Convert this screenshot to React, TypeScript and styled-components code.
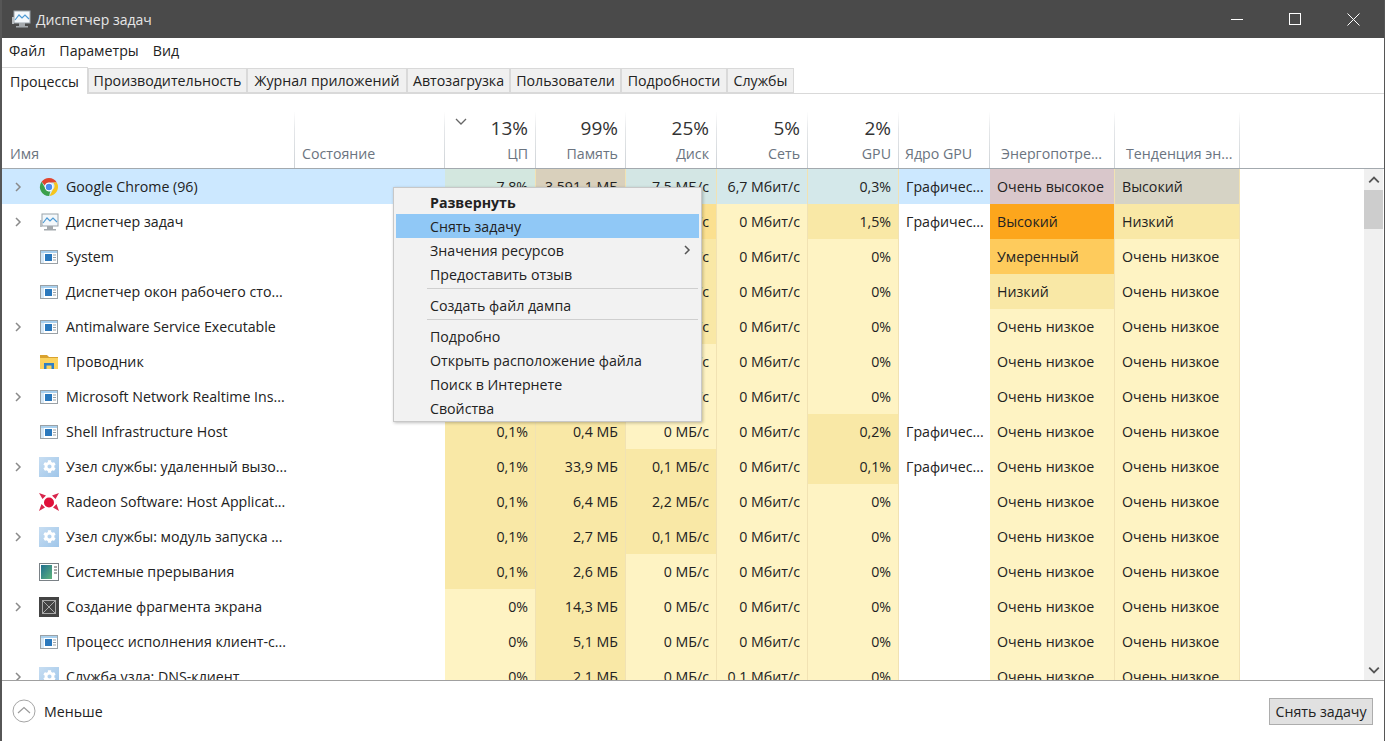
import { FaCog } from 'react-icons/fa';
import styled, { createGlobalStyle } from 'styled-components';

const COLUMNS = '293px 150px 91px 90px 91px 91px 91px 91px 125px 125px';

const heat: Record<string, string> = {
  none: 'transparent',
  low: '#fef3c3',
  mild: '#f9e8a6',
  warm: '#fbe08f',
  med: '#fecb5c',
  high: '#fda61c',
  selBlue: '#cce8ff',
  selCpu: '#d3e7df',
  selMem: '#d9d0bc',
  selDisk: '#d3e6e4',
  selNet: '#d4e8ea',
  selEnergy: '#d9c7cb',
  selTrend: '#d6d3c5',
};

const GlobalStyle = createGlobalStyle`
  html, body {
    margin: 0;
    padding: 0;
    background: #fff;
  }

  body {
    font-family: 'Open Sans', 'Noto Sans', sans-serif;
    font-size: 14.2px;
    color: #222;
  }
`;

const Window = styled.div`
  position: relative;
  display: flex;
  flex-direction: column;
  box-sizing: border-box;
  width: 1385px;
  height: 741px;
  overflow: hidden;
  background: #fff;
  border-left: 2px solid #565656;
  border-right: 1px solid #565656;
`;

const TitleBar = styled.div`
  display: flex;
  align-items: center;
  flex: 0 0 38px;
  margin-left: -2px;
  margin-right: -1px;
  padding: 0 3px 0 11px;
  background: #4a4a4a;
  color: #e6e6e6;
  font-size: 14px;
`;

const TitleText = styled.span`
  margin-left: 5px;
  flex: 1;
`;

const WindowButton = styled.div`
  display: flex;
  align-items: center;
  justify-content: center;
  width: 58px;
  height: 38px;
`;

const MenuBar = styled.div`
  display: flex;
  align-items: center;
  gap: 14px;
  flex: 0 0 24px;
  padding-left: 7px;
`;

const TabBar = styled.div`
  display: flex;
  align-items: flex-end;
  box-sizing: border-box;
  flex: 0 0 32px;
  border-bottom: 1px solid #d9d9d9;
`;

const Tab = styled.div<{ $width: number; $active?: boolean }>`
  display: flex;
  align-items: center;
  justify-content: center;
  box-sizing: border-box;
  width: ${({ $width }) => $width}px;
  height: ${({ $active }) => ($active ? 27 : 25)}px;
  margin-bottom: ${({ $active }) => ($active ? -1 : 0)}px;
  background: ${({ $active }) => ($active ? '#fff' : '#f0f0f0')};
  border: 1px solid #d9d9d9;
  border-left: ${({ $active }) => ($active ? 'none' : '1px solid #d9d9d9')};
  border-bottom: ${({ $active }) => ($active ? 'none' : '1px solid #d9d9d9')};
  white-space: nowrap;
`;

const TableHeader = styled.div`
  position: relative;
  display: grid;
  grid-template-columns: ${COLUMNS};
  box-sizing: border-box;
  flex: 0 0 75px;
  border-bottom: 1px solid #a3a9ae;
`;

const HeaderCell = styled.div<{ $right?: boolean; $inset?: number }>`
  display: flex;
  flex-direction: column;
  justify-content: flex-end;
  align-items: ${({ $right }) => ($right ? 'flex-end' : 'flex-start')};
  box-sizing: border-box;
  margin-top: 18px;
  padding: 0 7px 5px ${({ $inset }) => $inset ?? 7}px;
  border-right: 1px solid;
  border-image: linear-gradient(to bottom, #fff 0, #e6e8ea 30%, #cdd2d6 100%) 1;
  color: #6b7480;
  white-space: nowrap;
`;

const Percent = styled.div`
  margin-bottom: 3px;
  font-size: 19px;
  line-height: 26px;
  color: #333;
`;

const SortArrow = styled.svg`
  position: absolute;
  left: 452px;
  top: 24px;
`;

const TableBody = styled.div`
  display: flex;
  flex: 1;
  min-height: 0;
`;

const Rows = styled.div`
  flex: 1;
  overflow: hidden;
`;

const Row = styled.div`
  display: grid;
  grid-template-columns: ${COLUMNS};
  height: 35px;
`;

const NameCell = styled.div<{ $selected?: boolean }>`
  display: flex;
  align-items: center;
  padding-left: 10px;
  background: ${({ $selected }) => ($selected ? heat.selBlue : 'transparent')};
  white-space: nowrap;
`;

const Expander = styled.span`
  display: flex;
  justify-content: center;
  width: 12px;
`;

const IconSlot = styled.span`
  display: flex;
  justify-content: center;
  width: 20px;
  margin: 0 7px 0 15px;
`;

const GearTile = styled.span`
  display: flex;
  align-items: center;
  justify-content: center;
  width: 20px;
  height: 20px;
  background: linear-gradient(135deg, #c8def2, #9fc6ea);
  color: #fff;
`;

const Cell = styled.div<{ $level: string; $right?: boolean }>`
  display: flex;
  align-items: center;
  justify-content: ${({ $right }) => ($right ? 'flex-end' : 'flex-start')};
  box-sizing: border-box;
  padding: 0 7px;
  background: ${({ $level }) => heat[$level]};
  border-right: 1px solid ${({ $level }) => ($level === 'none' || $level === 'selBlue' ? 'transparent' : '#f1e2b3')};
  white-space: nowrap;
`;

const Scrollbar = styled.div`
  display: flex;
  flex-direction: column;
  flex: 0 0 19px;
  margin-right: 1px;
  background: #f0f0f0;
`;

const ScrollButton = styled.div`
  display: flex;
  align-items: center;
  justify-content: center;
  flex: 0 0 21px;
`;

const ScrollThumb = styled.div`
  flex: 0 0 39px;
  background: #cdcdcd;
`;

const ScrollTrack = styled.div`
  flex: 1;
`;

const Footer = styled.div`
  display: flex;
  align-items: center;
  box-sizing: border-box;
  flex: 0 0 61px;
  padding: 0 11px 0 10px;
  border-top: 1px solid #a0a0a0;
`;

const Collapse = styled.div`
  display: flex;
  align-items: center;
  gap: 8px;
  flex: 1;
`;

const EndButton = styled.div`
  display: flex;
  align-items: center;
  justify-content: center;
  box-sizing: border-box;
  width: 104px;
  height: 27px;
  background: #e1e1e1;
  border: 1px solid #adadad;
`;

const ContextMenu = styled.div`
  position: absolute;
  left: 391px;
  top: 187px;
  box-sizing: border-box;
  width: 309px;
  height: 235px;
  padding: 2px 2px 1px;
  background: #f2f2f2;
  border: 1px solid #c8c8c8;
  box-shadow: 1px 1px 3px rgba(0 0 0 / 25%);
`;

const MenuItem = styled.div<{ $active?: boolean; $bold?: boolean }>`
  display: flex;
  align-items: center;
  justify-content: space-between;
  height: 24px;
  padding: 0 7px 0 34px;
  background: ${({ $active }) => ($active ? '#90c8f6' : 'transparent')};
  font-weight: ${({ $bold }) => ($bold ? 700 : 400)};
`;

const MenuSeparator = styled.div`
  height: 1px;
  margin: 2px 1px 4px 31px;
  background: #cfcfcf;
`;

const TaskManagerIcon = ({ size = 20 }: { size?: number }) => (
  <svg width={size} height={size} viewBox="0 0 20 20">
    <rect x="3" y="2" width="16" height="12" fill="#f4f8fb" stroke="#9aa3aa" />
    <path d="M4 11l4-5 3 3 3-3 4 4" fill="none" stroke="#4d9ad4" strokeWidth="1.2" />
    <rect x="1" y="8" width="2" height="7" fill="#b9bdc0" />
    <path d="M8 14h6v3H8zM5 17h12v1.5H5z" fill="#a4a9ad" />
  </svg>
);

const ChromeIcon = () => (
  <svg width="20" height="20" viewBox="0 0 20 20">
    <path d="M10 1a9 9 0 0 1 7.8 4.5H10a4.5 4.5 0 0 0-4.2 3L2.6 4.800A9 9 0 0 1 10 1z" fill="#e0452f" />
    <path d="M17.800 5.500A9 9 0 0 1 10.500 19l3.400-6.500a4.500 4.500 0 0 0 0-7z" fill="#f6c51d" />
    <path d="M2.600 4.800l3.600 6.500a4.500 4.500 0 0 0 5 3l-1 4.700A9 9 0 0 1 2.600 4.800z" fill="#3ba04c" />
    <circle cx="10" cy="10" r="4.200" fill="#fff" />
    <circle cx="10" cy="10" r="3.200" fill="#4a8bf0" />
  </svg>
);

const AppIcon = () => (
  <svg width="20" height="20" viewBox="0 0 20 20">
    <rect x="1.500" y="3.500" width="17" height="13" fill="#fff" stroke="#9aa1a6" />
    <rect x="2" y="4" width="16" height="2" fill="#a9d0ee" />
    <rect x="2" y="6" width="3" height="10" fill="#d6e8f6" />
    <rect x="6" y="7" width="7" height="7" fill="#2a78bd" />
    <path d="M14 8h3M14 10.500h3M14 13h3" stroke="#9aa1a6" />
  </svg>
);

const FolderIcon = () => (
  <svg width="20" height="20" viewBox="0 0 20 20">
    <path d="M1 3h7l2 2h9v3H1z" fill="#d9a22e" />
    <rect x="1" y="6" width="18" height="11" fill="#fbd35f" />
    <path d="M5 17v-6h10v6h-2.500v-3.500h-5V17z" fill="#2f7fc4" />
  </svg>
);

const GearIcon = () => (
  <GearTile>
    <FaCog size={13} />
  </GearTile>
);

const RadeonIcon = () => (
  <svg width="20" height="20" viewBox="0 0 20 20">
    <circle cx="10" cy="10.500" r="5" fill="#e0103a" />
    <path d="M0 1l7 2.500-3.500 3.500zM20 1l-7 2.500 3.500 3.500zM0 19l2.500-7 3.500 3.500zM20 19l-2.500-7-3.500 3.500z" fill="#d8274d" />
  </svg>
);

const InterruptIcon = () => (
  <svg width="20" height="20" viewBox="0 0 20 20">
    <defs>
      <linearGradient id="irq" x1="0" x2="1" y1="0" y2="1">
        <stop offset="0" stopColor="#1f6f8f" />
        <stop offset="1" stopColor="#5fb47c" />
      </linearGradient>
    </defs>
    <rect x="0.500" y="1.500" width="19" height="17" fill="#fff" stroke="#7a8186" />
    <rect x="2" y="3" width="11" height="14" fill="url(#irq)" />
    <path d="M15 5h3M15 8h3M15 11h3" stroke="#555" />
  </svg>
);

const SnipIcon = () => (
  <svg width="20" height="20" viewBox="0 0 20 20">
    <rect width="20" height="20" fill="#444" />
    <rect x="3.500" y="3.500" width="13" height="13" fill="none" stroke="#aaa" />
    <path d="M3.500 3.500l13 13M16.500 3.500l-13 13" stroke="#aaa" />
  </svg>
);

const icons = {
  chrome: <ChromeIcon />,
  taskmgr: <TaskManagerIcon />,
  app: <AppIcon />,
  folder: <FolderIcon />,
  gear: <GearIcon />,
  radeon: <RadeonIcon />,
  irq: <InterruptIcon />,
  snip: <SnipIcon />,
};

const Chevron = ({ dir, color = '#8a8a8a', size = 10 }: { dir: 'up' | 'down' | 'right'; color?: string; size?: number }) => {
  const points = { up: '1,7 5,3 9,7', down: '1,3 5,7 9,3', right: '3,1 7,5 3,9' }[dir];
  return (
    <svg width={size} height={size} viewBox="0 0 10 10">
      <polyline points={points} fill="none" stroke={color} strokeWidth="1.500" />
    </svg>
  );
};

const tabs = [
  { label: 'Процессы', width: 86, active: true },
  { label: 'Производительность', width: 159 },
  { label: 'Журнал приложений', width: 160 },
  { label: 'Автозагрузка', width: 103 },
  { label: 'Пользователи', width: 111 },
  { label: 'Подробности', width: 106 },
  { label: 'Службы', width: 67 },
];

const headers = [
  { label: 'Имя', inset: 8 },
  { label: 'Состояние' },
  { label: 'ЦП', percent: '13%' },
  { label: 'Память', percent: '99%' },
  { label: 'Диск', percent: '25%' },
  { label: 'Сеть', percent: '5%' },
  { label: 'GPU', percent: '2%' },
  { label: 'Ядро GPU', inset: 6 },
  { label: 'Энергопотре...', inset: 11 },
  { label: 'Тенденция эн...', inset: 11 },
];

type Process = {
  name: string;
  icon: keyof typeof icons;
  expand?: boolean;
  cpu: [string, string];
  mem: [string, string];
  disk: [string, string];
  net: [string, string];
  gpu: [string, string];
  engine?: string;
  energy: [string, string];
  trend: [string, string];
};

const veryLow: [string, string] = ['Очень низкое', 'low'];
const noNet: [string, string] = ['0 Мбит/с', 'low'];
const noGpu: [string, string] = ['0%', 'low'];
const noDisk: [string, string] = ['0 МБ/с', 'low'];
const gfx = 'Графичес...';

const processes: Process[] = [
  { name: 'Google Chrome (96)', icon: 'chrome', expand: true, cpu: ['7,8%', 'selCpu'], mem: ['3 591,1 МБ', 'selMem'], disk: ['7,5 МБ/с', 'selDisk'], net: ['6,7 Мбит/с', 'selNet'], gpu: ['0,3%', 'selNet'], engine: gfx, energy: ['Очень высокое', 'selEnergy'], trend: ['Высокий', 'selTrend'] },
  { name: 'Диспетчер задач', icon: 'taskmgr', expand: true, cpu: ['1,5%', 'mild'], mem: ['32,4 МБ', 'mild'], disk: ['0,4 МБ/с', 'warm'], net: noNet, gpu: ['1,5%', 'mild'], engine: gfx, energy: ['Высокий', 'high'], trend: ['Низкий', 'mild'] },
  { name: 'System', icon: 'app', cpu: ['0,9%', 'mild'], mem: ['0,1 МБ', 'mild'], disk: ['0,1 МБ/с', 'mild'], net: noNet, gpu: noGpu, energy: ['Умеренный', 'med'], trend: veryLow },
  { name: 'Диспетчер окон рабочего сто...', icon: 'app', cpu: ['0,6%', 'mild'], mem: ['24,6 МБ', 'mild'], disk: ['0,2 МБ/с', 'mild'], net: noNet, gpu: noGpu, energy: ['Низкий', 'mild'], trend: veryLow },
  { name: 'Antimalware Service Executable', icon: 'app', expand: true, cpu: ['0,3%', 'mild'], mem: ['98,2 МБ', 'mild'], disk: ['0,2 МБ/с', 'mild'], net: noNet, gpu: noGpu, energy: veryLow, trend: veryLow },
  { name: 'Проводник', icon: 'folder', cpu: ['0,2%', 'mild'], mem: ['40,7 МБ', 'mild'], disk: noDisk, net: noNet, gpu: noGpu, energy: veryLow, trend: veryLow },
  { name: 'Microsoft Network Realtime Ins...', icon: 'app', expand: true, cpu: ['0,1%', 'mild'], mem: ['3,2 МБ', 'mild'], disk: noDisk, net: noNet, gpu: noGpu, energy: veryLow, trend: veryLow },
  { name: 'Shell Infrastructure Host', icon: 'app', cpu: ['0,1%', 'mild'], mem: ['0,4 МБ', 'mild'], disk: noDisk, net: noNet, gpu: ['0,2%', 'mild'], engine: gfx, energy: veryLow, trend: veryLow },
  { name: 'Узел службы: удаленный вызо...', icon: 'gear', expand: true, cpu: ['0,1%', 'mild'], mem: ['33,9 МБ', 'mild'], disk: ['0,1 МБ/с', 'mild'], net: noNet, gpu: ['0,1%', 'mild'], engine: gfx, energy: veryLow, trend: veryLow },
  { name: 'Radeon Software: Host Applicat...', icon: 'radeon', cpu: ['0,1%', 'mild'], mem: ['6,4 МБ', 'mild'], disk: ['2,2 МБ/с', 'mild'], net: noNet, gpu: noGpu, energy: veryLow, trend: veryLow },
  { name: 'Узел службы: модуль запуска ...', icon: 'gear', expand: true, cpu: ['0,1%', 'mild'], mem: ['2,7 МБ', 'mild'], disk: ['0,1 МБ/с', 'mild'], net: noNet, gpu: noGpu, energy: veryLow, trend: veryLow },
  { name: 'Системные прерывания', icon: 'irq', cpu: ['0,1%', 'mild'], mem: ['2,6 МБ', 'mild'], disk: noDisk, net: noNet, gpu: noGpu, energy: veryLow, trend: veryLow },
  { name: 'Создание фрагмента экрана', icon: 'snip', expand: true, cpu: ['0%', 'low'], mem: ['14,3 МБ', 'mild'], disk: noDisk, net: noNet, gpu: noGpu, energy: veryLow, trend: veryLow },
  { name: 'Процесс исполнения клиент-с...', icon: 'app', cpu: ['0%', 'low'], mem: ['5,1 МБ', 'mild'], disk: noDisk, net: noNet, gpu: noGpu, energy: veryLow, trend: veryLow },
  { name: 'Служба узла: DNS-клиент', icon: 'gear', expand: true, cpu: ['0%', 'low'], mem: ['2,1 МБ', 'mild'], disk: noDisk, net: ['0,1 Мбит/с', 'low'], gpu: noGpu, energy: veryLow, trend: veryLow },
];

const App = () => (
  <>
    <GlobalStyle />
    <Window>
      <TitleBar>
        <TaskManagerIcon />
        <TitleText>Диспетчер задач</TitleText>
        <WindowButton>
          <svg width="12" height="12" viewBox="0 0 12 12">
            <path d="M0 6.500h12" stroke="#fff" />
          </svg>
        </WindowButton>
        <WindowButton>
          <svg width="12" height="12" viewBox="0 0 12 12">
            <rect x="0.500" y="0.500" width="11" height="11" fill="none" stroke="#fff" />
          </svg>
        </WindowButton>
        <WindowButton>
          <svg width="13" height="13" viewBox="0 0 13 13">
            <path d="M0.500 0.500l12 12M12.500 0.500l-12 12" stroke="#fff" />
          </svg>
        </WindowButton>
      </TitleBar>

      <MenuBar>
        <span>Файл</span>
        <span>Параметры</span>
        <span>Вид</span>
      </MenuBar>

      <TabBar>
        {tabs.map((tab) => (
          <Tab key={tab.label} $width={tab.width} $active={tab.active}>
            {tab.label}
          </Tab>
        ))}
      </TabBar>

      <TableHeader>
        <SortArrow width="14" height="8" viewBox="0 0 14 8">
          <polyline points="2,1 7,6 12,1" fill="none" stroke="#666" strokeWidth="1.300" />
        </SortArrow>
        {headers.map((header) => (
          <HeaderCell key={header.label} $right={Boolean(header.percent)} $inset={header.inset}>
            {header.percent && <Percent>{header.percent}</Percent>}
            {header.label}
          </HeaderCell>
        ))}
      </TableHeader>

      <TableBody>
        <Rows>
          {processes.map((process, index) => {
            const selected = index === 0;
            return (
              <Row key={process.name}>
                <NameCell $selected={selected}>
                  <Expander>{process.expand && <Chevron dir="right" />}</Expander>
                  <IconSlot>{icons[process.icon]}</IconSlot>
                  {process.name}
                </NameCell>
                <Cell $level={selected ? 'selBlue' : 'none'} />
                <Cell $level={process.cpu[1]} $right>{process.cpu[0]}</Cell>
                <Cell $level={process.mem[1]} $right>{process.mem[0]}</Cell>
                <Cell $level={process.disk[1]} $right>{process.disk[0]}</Cell>
                <Cell $level={process.net[1]} $right>{process.net[0]}</Cell>
                <Cell $level={process.gpu[1]} $right>{process.gpu[0]}</Cell>
                <Cell $level={selected ? 'selBlue' : 'none'}>{process.engine}</Cell>
                <Cell $level={process.energy[1]}>{process.energy[0]}</Cell>
                <Cell $level={process.trend[1]}>{process.trend[0]}</Cell>
              </Row>
            );
          })}
        </Rows>
        <Scrollbar>
          <ScrollButton>
            <Chevron dir="up" color="#555" size={12} />
          </ScrollButton>
          <ScrollThumb />
          <ScrollTrack />
          <ScrollButton>
            <Chevron dir="down" color="#555" size={12} />
          </ScrollButton>
        </Scrollbar>
      </TableBody>

      <Footer>
        <Collapse>
          <svg width="24" height="24" viewBox="0 0 24 24">
            <circle cx="12" cy="12" r="11" fill="#fff" stroke="#a5a5a5" />
            <polyline points="6,14 12,8.500 18,14" fill="none" stroke="#9a9a9a" strokeWidth="1.200" />
          </svg>
          Меньше
        </Collapse>
        <EndButton>Снять задачу</EndButton>
      </Footer>

      <ContextMenu>
        <MenuItem $bold>Развернуть</MenuItem>
        <MenuItem $active>Снять задачу</MenuItem>
        <MenuItem>
          Значения ресурсов
          <Chevron dir="right" color="#555" />
        </MenuItem>
        <MenuItem>Предоставить отзыв</MenuItem>
        <MenuSeparator />
        <MenuItem>Создать файл дампа</MenuItem>
        <MenuSeparator />
        <MenuItem>Подробно</MenuItem>
        <MenuItem>Открыть расположение файла</MenuItem>
        <MenuItem>Поиск в Интернете</MenuItem>
        <MenuItem>Свойства</MenuItem>
      </ContextMenu>
    </Window>
  </>
);

export default App;
